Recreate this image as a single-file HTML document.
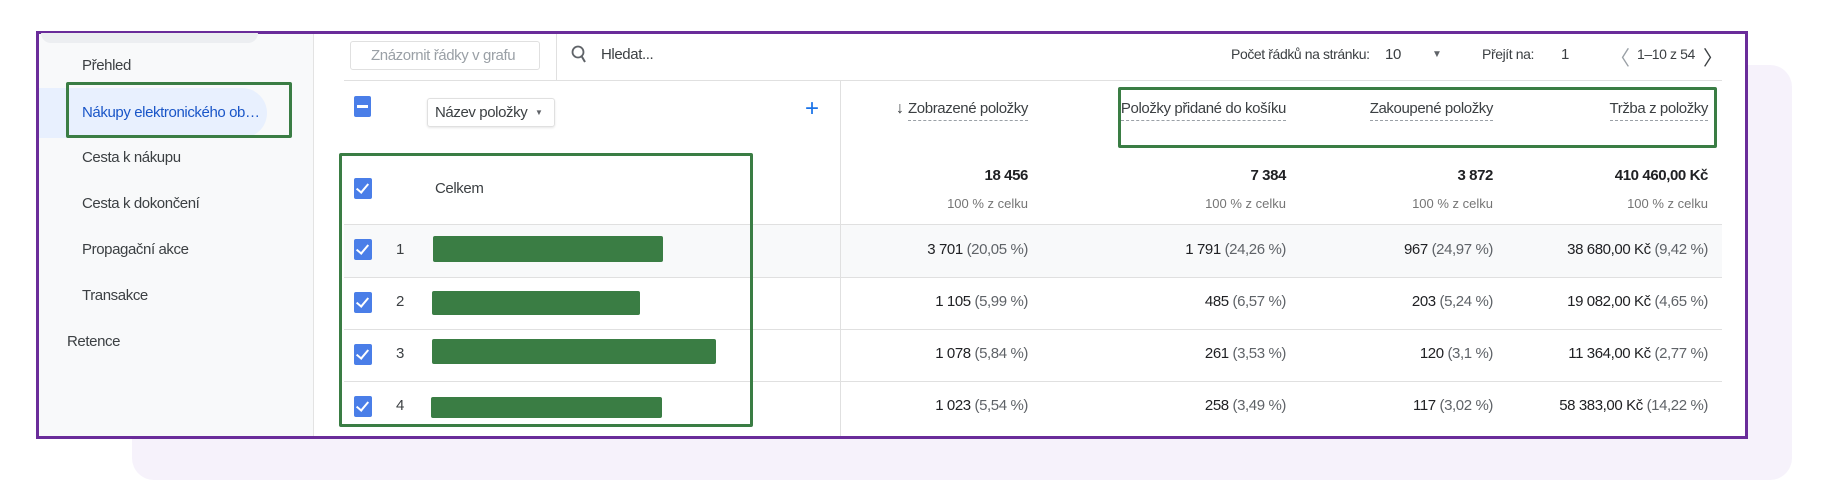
<!DOCTYPE html>
<html><head><meta charset="utf-8"><style>
*{margin:0;padding:0;box-sizing:border-box}
body{width:1845px;height:497px;background:#fff;position:relative;overflow:hidden;font-family:"Liberation Sans",sans-serif;color:#3c4043}
.a{position:absolute;white-space:nowrap}
.t{font-size:15px;letter-spacing:-0.4px}
.r{text-align:right}
.hd{font-size:15px;letter-spacing:-0.4px;color:#3c4043;border-bottom:1px dashed #9aa0a6;padding-bottom:3px}
.v{font-size:15px;letter-spacing:-0.4px;color:#202124}
.v span{color:#5f6368}
.cb{position:absolute;width:18px;height:21px;background:#4a7ee8;border-radius:2px}
.cb:after{content:"";position:absolute;left:5px;top:3px;width:5px;height:10px;border:solid #fff;border-width:0 2px 2px 0;transform:rotate(40deg)}
.bar{position:absolute;background:#3a7d44;border-radius:2px}
.line{position:absolute;height:1px;background:#e0e0e0;left:344px;width:1378px}
.g{position:absolute;border:3px solid #3a7d44;border-radius:2px}
</style></head><body>
<div class="a" style="left:132px;top:65px;width:1660px;height:415px;background:#f6f2fb;border-radius:22px"></div>
<div class="a" style="left:36px;top:31px;width:1712px;height:408px;background:#fff;border:3px solid #6a2c9a"></div>
<div class="a" style="left:39px;top:34px;width:275px;height:402px;background:#f8f9fa;border-right:1px solid #e3e3e3"></div>
<div class="a" style="left:41px;top:33px;width:217px;height:10px;background:#eceef1;border-radius:0 0 10px 10px"></div>
<div class="a" style="left:39px;top:88px;width:228px;height:50px;background:#e8f0fe;border-radius:0 25px 25px 0"></div>
<div class="g" style="left:66px;top:82px;width:226px;height:56px"></div>
<div class="a t" style="left:82px;top:57px;color:#3c4043">Přehled</div>
<div class="a t" style="left:82px;top:104px;color:#1a56c8">Nákupy elektronického ob…</div>
<div class="a t" style="left:82px;top:149px">Cesta k nákupu</div>
<div class="a t" style="left:82px;top:195px">Cesta k dokončení</div>
<div class="a t" style="left:82px;top:241px">Propagační akce</div>
<div class="a t" style="left:82px;top:287px">Transakce</div>
<div class="a t" style="left:67px;top:333px">Retence</div>

<div class="a" style="left:350px;top:41px;width:190px;height:29px;border:1px solid #e0e0e0;border-radius:3px"></div>
<div class="a t" style="left:371px;top:47px;color:#9aa0a6">Znázornit řádky v grafu</div>
<div class="a" style="left:556px;top:34px;width:1px;height:46px;background:#e0e0e0"></div>
<svg class="a" style="left:571px;top:45px" width="16" height="20" viewBox="0 0 16 20"><circle cx="7" cy="7" r="5.5" fill="none" stroke="#5f6368" stroke-width="1.8"/><path d="M10.5 11 L14 17" stroke="#5f6368" stroke-width="2"/></svg>
<div class="a t" style="left:601px;top:46px;color:#3c4043">Hledat...</div>
<div class="a t" style="left:1231px;top:46px;font-size:14px">Počet řádků na stránku:</div>
<div class="a t" style="left:1385px;top:46px">10</div>
<div class="a" style="left:1432px;top:49px;font-size:10px;color:#5f6368">▼</div>
<div class="a t" style="left:1482px;top:46px;font-size:14px">Přejít na:</div>
<div class="a t" style="left:1561px;top:46px">1</div>
<div class="a" style="left:1610px;top:42px;font-size:20px;color:#9aa0a6">〈</div>
<div class="a t" style="left:1637px;top:46px;font-size:14px">1–10 z 54</div>
<div class="a" style="left:1703px;top:42px;font-size:20px;color:#3c4043">〉</div>
<div class="line" style="top:80px"></div>

<div class="a" style="left:354px;top:96px;width:17px;height:21px;background:#4a7ee8;border-radius:2px"></div>
<div class="a" style="left:357px;top:105px;width:11px;height:3px;background:#fff"></div>
<div class="a" style="left:427px;top:98px;width:128px;height:29px;border:1px solid #e0e0e0;border-radius:3px;box-shadow:0 1px 2px rgba(0,0,0,.1)"></div>
<div class="a t" style="left:435px;top:104px">Název položky</div>
<div class="a" style="left:535px;top:108px;font-size:8px;color:#5f6368">▼</div>
<div class="a" style="left:805px;top:97px;font-size:24px;color:#1a73e8;line-height:24px">+</div>

<div class="a r" style="right:817px;top:100px"><span style="font-size:16px;margin-right:4px">↓</span><span class="hd">Zobrazené položky</span></div>
<div class="a r" style="right:559px;top:100px"><span class="hd">Položky přidané do košíku</span></div>
<div class="a r" style="right:352px;top:100px"><span class="hd">Zakoupené položky</span></div>
<div class="a r" style="right:137px;top:100px"><span class="hd">Tržba z položky</span></div>
<div class="g" style="left:1118px;top:87px;width:599px;height:61px"></div>

<div class="cb" style="left:354px;top:178px"></div>
<div class="a t" style="left:435px;top:180px">Celkem</div>
<div class="a r v" style="right:817px;top:167px;font-weight:bold">18 456</div>
<div class="a r v" style="right:559px;top:167px;font-weight:bold">7 384</div>
<div class="a r v" style="right:352px;top:167px;font-weight:bold">3 872</div>
<div class="a r v" style="right:137px;top:167px;font-weight:bold">410 460,00 Kč</div>
<div class="a r" style="right:817px;top:196px;font-size:13px;color:#757575">100 % z celku</div>
<div class="a r" style="right:559px;top:196px;font-size:13px;color:#757575">100 % z celku</div>
<div class="a r" style="right:352px;top:196px;font-size:13px;color:#757575">100 % z celku</div>
<div class="a r" style="right:137px;top:196px;font-size:13px;color:#757575">100 % z celku</div>

<div class="a" style="left:344px;top:224px;width:1378px;height:53px;background:#f8f9fa"></div>
<div class="a" style="left:840px;top:80px;width:1px;height:356px;background:#e0e0e0"></div>
<div class="line" style="top:224px"></div>
<div class="line" style="top:277px"></div>
<div class="line" style="top:329px"></div>
<div class="line" style="top:381px"></div>

<div class="cb" style="left:354px;top:239px"></div><div class="a t" style="left:396px;top:241px">1</div>
<div class="cb" style="left:354px;top:292px"></div><div class="a t" style="left:396px;top:293px">2</div>
<div class="cb" style="left:354px;top:344px"></div><div class="a t" style="left:396px;top:345px">3</div>
<div class="cb" style="left:354px;top:396px"></div><div class="a t" style="left:396px;top:397px">4</div>
<div class="bar" style="left:433px;top:236px;width:230px;height:26px"></div>
<div class="bar" style="left:432px;top:291px;width:208px;height:24px"></div>
<div class="bar" style="left:432px;top:339px;width:284px;height:25px"></div>
<div class="bar" style="left:431px;top:397px;width:231px;height:21px"></div>
<div class="g" style="left:339px;top:153px;width:414px;height:274px"></div>

<div class="a r v" style="right:817px;top:241px">3 701 <span>(20,05 %)</span></div>
<div class="a r v" style="right:559px;top:241px">1 791 <span>(24,26 %)</span></div>
<div class="a r v" style="right:352px;top:241px">967 <span>(24,97 %)</span></div>
<div class="a r v" style="right:137px;top:241px">38 680,00 Kč <span>(9,42 %)</span></div>
<div class="a r v" style="right:817px;top:293px">1 105 <span>(5,99 %)</span></div>
<div class="a r v" style="right:559px;top:293px">485 <span>(6,57 %)</span></div>
<div class="a r v" style="right:352px;top:293px">203 <span>(5,24 %)</span></div>
<div class="a r v" style="right:137px;top:293px">19 082,00 Kč <span>(4,65 %)</span></div>
<div class="a r v" style="right:817px;top:345px">1 078 <span>(5,84 %)</span></div>
<div class="a r v" style="right:559px;top:345px">261 <span>(3,53 %)</span></div>
<div class="a r v" style="right:352px;top:345px">120 <span>(3,1 %)</span></div>
<div class="a r v" style="right:137px;top:345px">11 364,00 Kč <span>(2,77 %)</span></div>
<div class="a r v" style="right:817px;top:397px">1 023 <span>(5,54 %)</span></div>
<div class="a r v" style="right:559px;top:397px">258 <span>(3,49 %)</span></div>
<div class="a r v" style="right:352px;top:397px">117 <span>(3,02 %)</span></div>
<div class="a r v" style="right:137px;top:397px">58 383,00 Kč <span>(14,22 %)</span></div>
</body></html>
